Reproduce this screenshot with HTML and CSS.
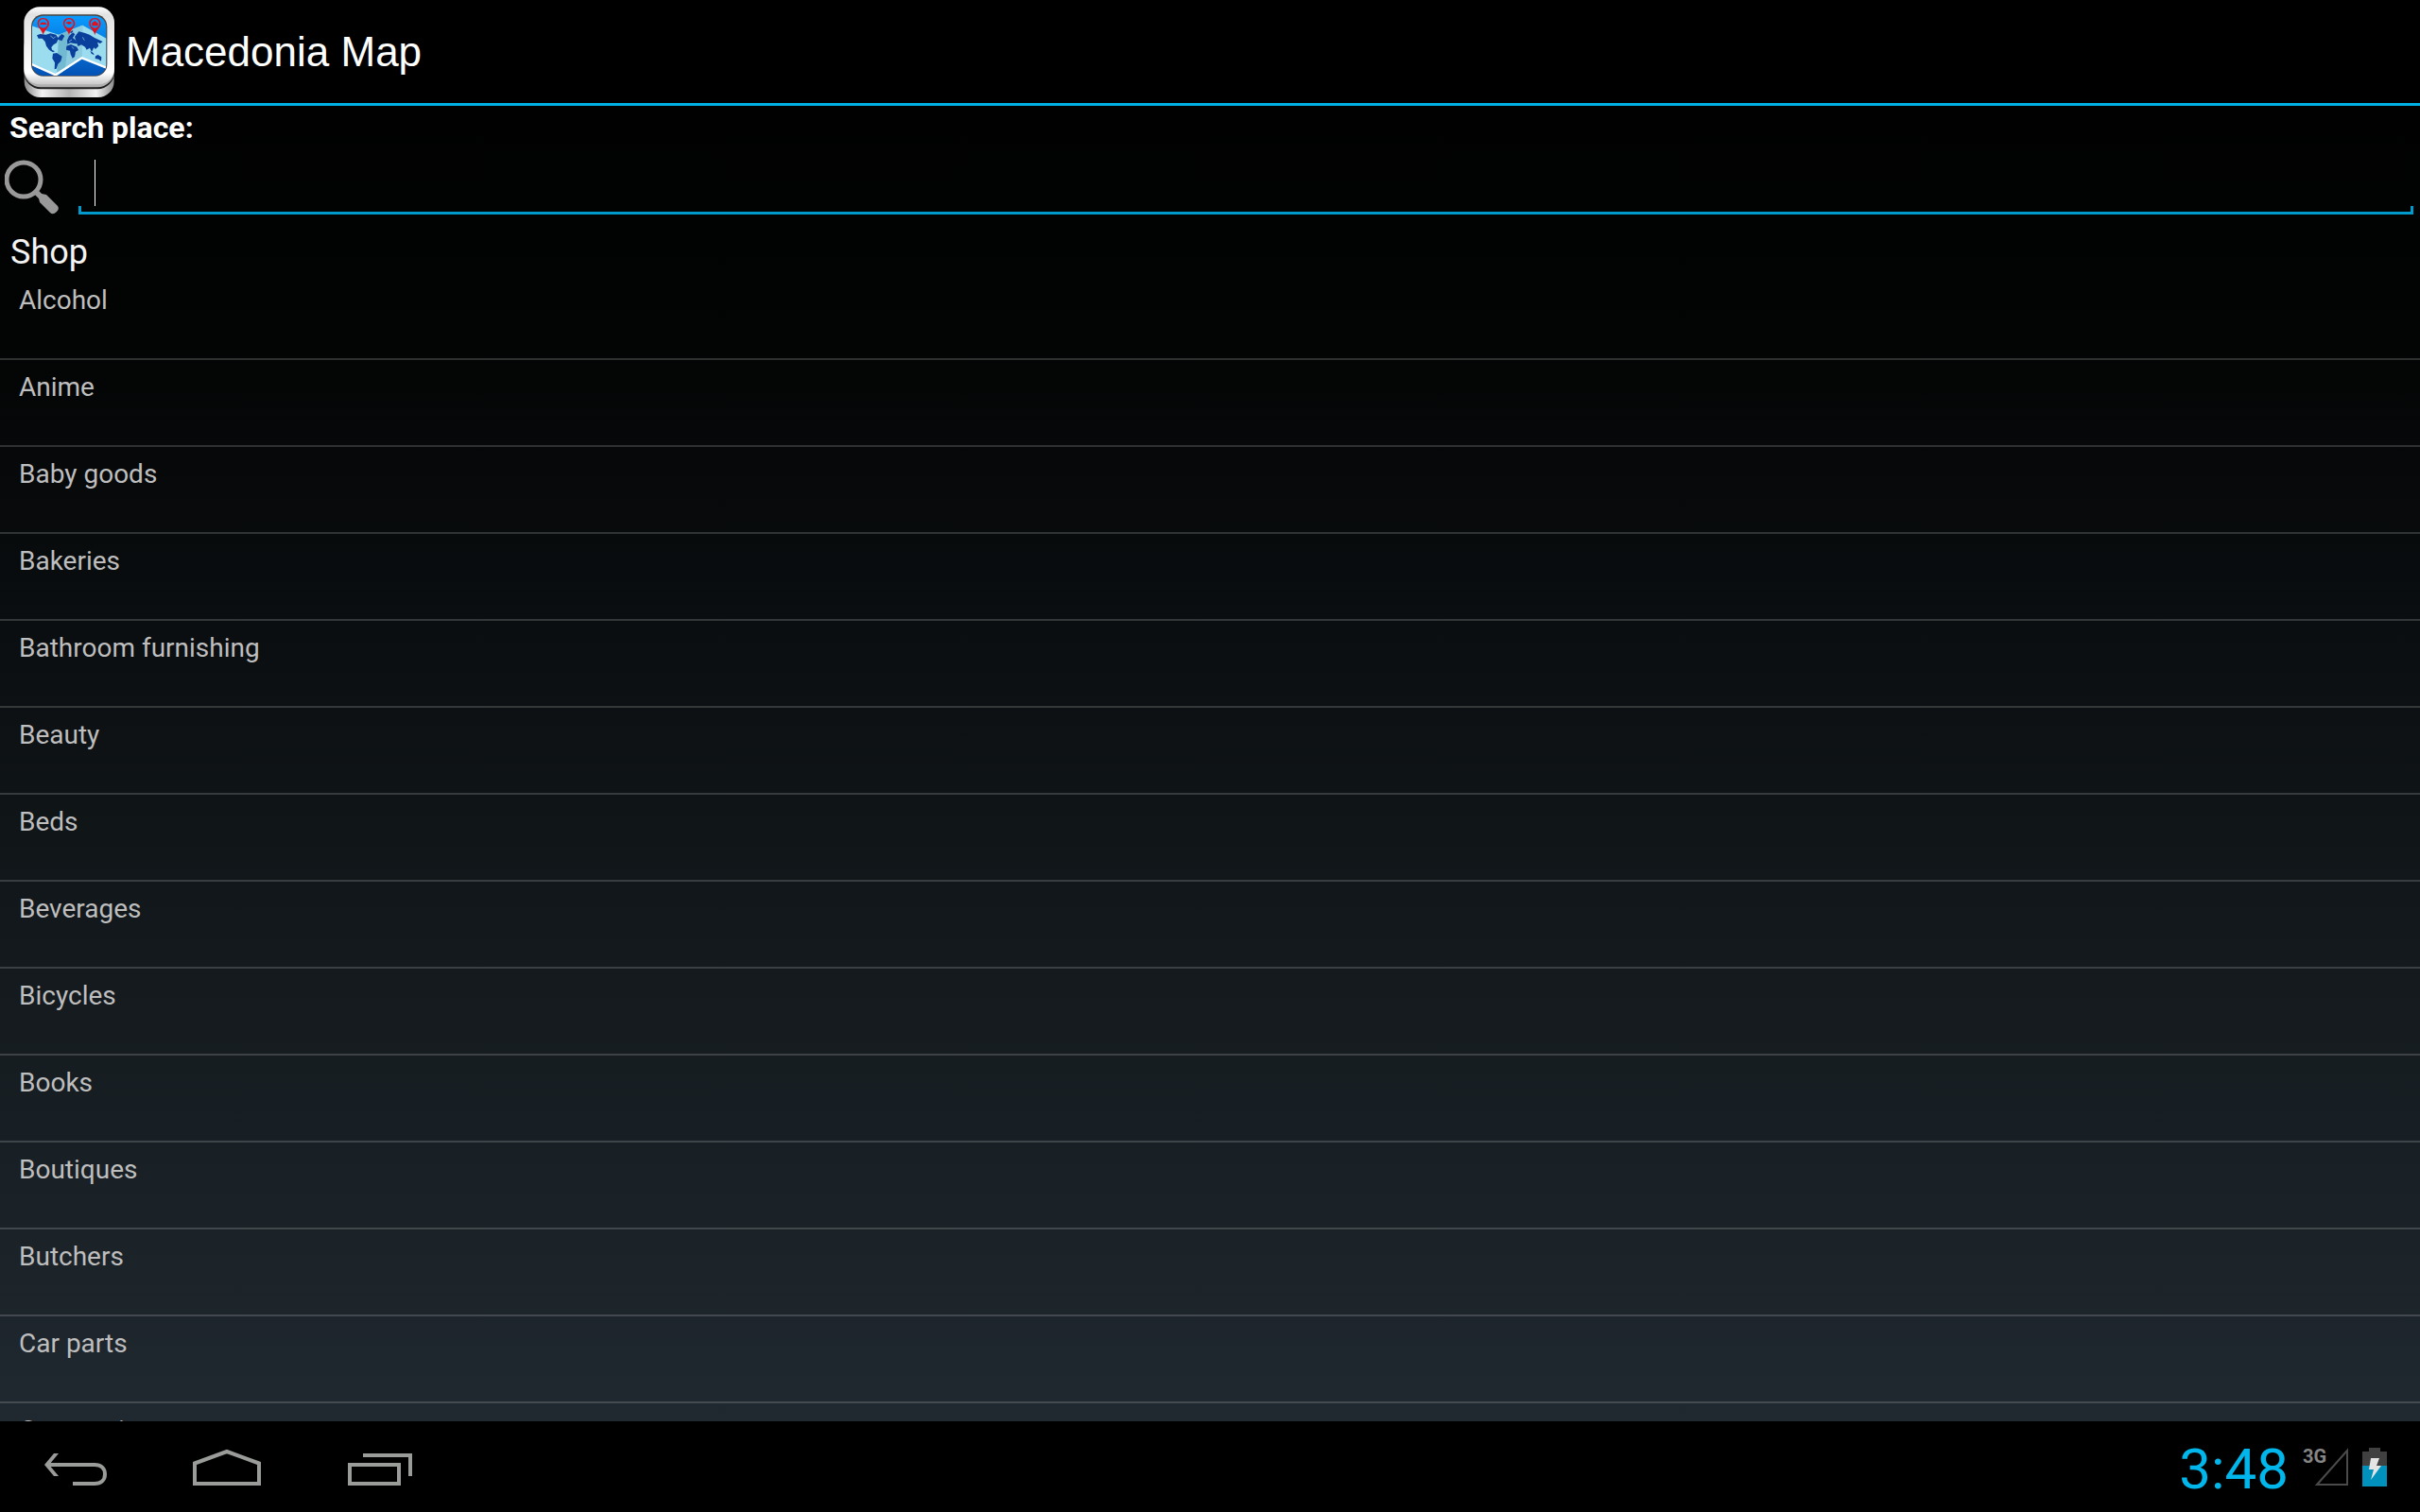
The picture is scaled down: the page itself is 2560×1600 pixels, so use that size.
FILE: index.html
```html
<!DOCTYPE html>
<html lang="en">
<head>
    <meta charset="UTF-8">
    <title>Macedonia Map</title>
    <link rel="stylesheet" href="styles.css">
</head>
<body>
    <header class="action-bar">
        <svg class="app-icon" viewBox="75 23 288 288" aria-hidden="true">
            <defs>
                <linearGradient id="base" x1="0" x2="1" y1="0" y2="0">
                    <stop offset="0" stop-color="#8a8a8a"/>
                    <stop offset="0.2" stop-color="#f2f2f2"/>
                    <stop offset="0.5" stop-color="#b4b4b4"/>
                    <stop offset="0.8" stop-color="#f2f2f2"/>
                    <stop offset="1" stop-color="#8a8a8a"/>
                </linearGradient>
                <linearGradient id="frame" x1="0" x2="0" y1="0" y2="1">
                    <stop offset="0" stop-color="#ffffff"/>
                    <stop offset="0.1" stop-color="#e2e2e2"/>
                    <stop offset="0.85" stop-color="#ffffff"/>
                    <stop offset="1" stop-color="#c8c8c8"/>
                </linearGradient>
                <linearGradient id="sky" x1="0" x2="0" y1="0" y2="1">
                    <stop offset="0" stop-color="#0a9cff"/>
                    <stop offset="1" stop-color="#0450b4"/>
                </linearGradient>
                <clipPath id="screen"><rect x="102" y="52" width="235" height="190" rx="36"/></clipPath>
            </defs>
            <rect x="77" y="120" width="285" height="191" rx="50" fill="url(#base)"/>
            <rect x="76" y="100" width="287" height="185" rx="54" fill="#1c1c1c"/>
            <rect x="76" y="100" width="287" height="179" rx="54" fill="#b0b0b0"/>
            <rect x="76" y="24" width="287" height="246" rx="50" fill="url(#frame)"/>
            <rect x="99" y="48" width="241" height="196" rx="38" fill="#4a4440"/>
            <g clip-path="url(#screen)">
                <rect x="100" y="50" width="240" height="195" fill="url(#sky)"/>
                <!-- folded paper -->
                <path d="M100 84L186 112L262 82L338 124V220L260 186L180 243L100 209Z" fill="#9bdcee"/>
                <path d="M186 112L262 82L258 186L180 243Z" fill="#72b9d2"/>
                <path d="M222 98L262 82L260 186L206 224Z" fill="#8ccbe0"/>
                <path d="M100 206L176 240L260 186L338 217" fill="none" stroke="#fff" stroke-width="7"/>
                <!-- continents -->
                <g fill="#0a3f9c">
                    <path d="M117 114L128 110L146 112L160 108L178 112L184 122L196 110L205 116L196 132L184 127L180 138L170 144L163 152L165 160L174 165L168 168L156 160L147 148L143 134L134 124L122 124Z"/>
                    <path d="M168 172L180 170L197 181L193 196L184 205L179 220L173 222L174 201L166 187Z"/>
                    <path d="M213 130L219 117L231 105L238 111L231 122L241 130L245 141L235 140L224 138L214 142Z"/>
                    <path d="M211 148L225 143L244 151L249 161L240 166L237 182L230 187L224 174L222 163L210 160Z"/>
                    <path d="M237 119L250 102L270 107L284 112L300 122L326 134L318 140L309 136L313 148L303 158L298 153L291 167L285 154L275 160L270 151L258 144L248 149L243 138Z"/>
                    <path d="M286 164L296 170L299 177L290 172ZM303 180L311 176L322 183L321 196L313 190L302 188ZM222 104L231 98L232 102L225 108Z"/>
                </g>
                <g fill="none" stroke="#9bdcee" stroke-width="2">
                    <path d="M160 116L170 124L176 118M219 134L228 128M228 150L234 157M262 120L268 130"/>
                </g>
            </g>
            <g fill="#e3101c">
                <path id="pin" d="M137 59C125 59 118 68 119 78C120 90 134 98 137 114C140 98 155 90 156 78C156 68 149 59 137 59ZM137 63A14 14 0 1 1 137 91A14 14 0 1 1 137 63Z" fill-rule="evenodd"/>
                <use href="#pin" x="82"/>
                <use href="#pin" x="164"/>
                <path d="M126 80L131 73H144L149 80Z"/>
                <path d="M208 74L219 70L230 74L219 80Z"/>
                <path d="M291 76L301 68L311 76V84H292Z"/>
            </g>
        </svg>
        <h1 class="app-title">Macedonia Map</h1>
    </header>

    <main class="content">
        <label class="search-label" for="place">Search place:</label>
        <div class="search-row">
            <svg class="search-icon" viewBox="0 0 58 58" aria-hidden="true">
                <circle cx="20" cy="21" r="18" fill="none" stroke="#999" stroke-width="5"/>
                <path d="M32 33L38 39" stroke="#999" stroke-width="6"/>
                <path d="M36 41Q35 37 39 36L44 37L56 49Q58 52 55 55Q51 59 48 56L37 45Z" fill="#999"/>
            </svg>
            <div class="search-field">
                <input type="text" id="place">
            </div>
        </div>

        <h2 class="category">Shop</h2>
        <ul class="place-list">
            <li><a href="#">Alcohol</a></li>
            <li><a href="#">Anime</a></li>
            <li><a href="#">Baby goods</a></li>
            <li><a href="#">Bakeries</a></li>
            <li><a href="#">Bathroom furnishing</a></li>
            <li><a href="#">Beauty</a></li>
            <li><a href="#">Beds</a></li>
            <li><a href="#">Beverages</a></li>
            <li><a href="#">Bicycles</a></li>
            <li><a href="#">Books</a></li>
            <li><a href="#">Boutiques</a></li>
            <li><a href="#">Butchers</a></li>
            <li><a href="#">Car parts</a></li>
            <li><a href="#">Car repair</a></li>
        </ul>
    </main>

    <footer class="system-bar">
        <nav class="nav-buttons">
            <button type="button" aria-label="Back">
                <svg viewBox="0 0 160 96">
                    <path d="M50 46H100C107 46 111 50 111 56S107 66 100 66H77" fill="none" stroke="#9a9c99" stroke-width="4"/>
                    <path d="M47 46L57 34H62L52 46L62 58H57Z" fill="#9a9c99"/>
                </svg>
            </button>
            <button type="button" aria-label="Home">
                <svg viewBox="0 0 160 96">
                    <path d="M46 44.5L80 32L114 44.5V66H46Z" fill="none" stroke="#9a9c99" stroke-width="4"/>
                </svg>
            </button>
            <button type="button" aria-label="Recent apps">
                <svg viewBox="0 0 160 96">
                    <path d="M50 46H102V66H50ZM64 36H114V58" fill="none" stroke="#9a9c99" stroke-width="4"/>
                </svg>
            </button>
        </nav>
        <div class="status">
            <span class="clock">3:48</span>
            <div class="signal">
                <span class="network">3G</span>
                <svg viewBox="0 0 37 42" aria-hidden="true">
                    <path d="M3 40L35 4V40Z" fill="none" stroke="#4a4a4a" stroke-width="2"/>
                </svg>
            </div>
            <svg class="battery" viewBox="0 0 26 41" role="img" aria-label="Battery charging">
                <path d="M0 4H7V0H19V4H26V20H0Z" fill="#404040"/>
                <path d="M0 19H26V41H0Z" fill="#0092bd"/>
                <path d="M9 11H18L15 19H20L9 34L12 23H7Z" fill="#e4e4e4"/>
            </svg>
        </div>
    </footer>
</body>
</html>
```
FILE: styles.css
```css
* {
    box-sizing: border-box;
}
body {
    display: flex;
    flex-direction: column;
    height: 100vh;
    margin: 0;
    overflow: hidden;
    font-family: Roboto, sans-serif;
    color: #f3f3f3;
    background: linear-gradient(#000 0%, #020303 20%, #222c33 100%);
}

/* title bar */
.action-bar {
    display: flex;
    align-items: center;
    gap: 12px;
    height: 112px;
    padding-left: 25px;
    background: #000;
    border-bottom: 3px solid #00b0e4;
}
.app-icon {
    width: 96px;
    height: 96px;
}
.app-title {
    margin: 0;
    font: 44px "Liberation Sans", Arial, sans-serif;
    color: #fff;
}

/* search */
.content {
    flex: 1;
    min-height: 0;
    overflow: hidden;
}
.search-label {
    display: block;
    padding: 4px 10px 0;
    font-size: 32px;
    font-weight: bold;
    line-height: 38px;
    color: #fff;
}
.search-row {
    display: flex;
    align-items: flex-end;
    gap: 20px;
    padding: 0 7px 18px 5px;
}
.search-icon {
    width: 58px;
    height: 58px;
}
.search-field {
    position: relative;
    flex: 1;
    height: 73px;
    border-bottom: 3px solid #0099cc;
    background:
        linear-gradient(#0099cc, #0099cc) left bottom / 3px 6px no-repeat,
        linear-gradient(#0099cc, #0099cc) right bottom / 3px 6px no-repeat;
}
.search-field input {
    width: 100%;
    height: 100%;
    padding: 0 17px;
    border: 0;
    outline: 0;
    background: none;
    color: #fff;
    font: 36px Roboto, sans-serif;
}
/* text cursor */
.search-field::before {
    content: "";
    position: absolute;
    left: 17px;
    top: 15px;
    width: 1px;
    height: 49px;
    background: #fff;
}

/* list */
.category {
    margin: 0;
    padding: 0 11px;
    font-size: 36px;
    font-weight: normal;
    line-height: 44px;
}
.place-list {
    margin: 0;
    padding: 0;
    list-style: none;
}
.place-list li {
    border-bottom: 2px solid rgba(255, 255, 255, 0.17);
}
.place-list a {
    display: block;
    padding: 11px 20px 43px;
    font-size: 28px;
    line-height: 36px;
    color: #bebebe;
    text-decoration: none;
}

/* system bar */
.system-bar {
    display: flex;
    align-items: center;
    justify-content: space-between;
    height: 96px;
    padding-right: 35px;
    background: #000;
}
.nav-buttons {
    display: flex;
}
.nav-buttons button {
    width: 160px;
    height: 96px;
    padding: 0;
    border: 0;
    background: none;
}
.nav-buttons svg {
    display: block;
}
.status {
    display: flex;
    align-items: center;
    gap: 14px;
}
.clock {
    padding-top: 6px;
    font-size: 60px;
    line-height: 60px;
    color: #00b6eb;
}
.signal {
    position: relative;
    width: 50px;
    height: 42px;
}
.signal svg {
    display: block;
    width: 37px;
    height: 42px;
    margin-left: auto;
}
.network {
    position: absolute;
    left: 1px;
    top: 0;
    font: bold 20px/20px Roboto, sans-serif;
    color: #858585;
}
.battery {
    width: 26px;
    height: 41px;
}
```
